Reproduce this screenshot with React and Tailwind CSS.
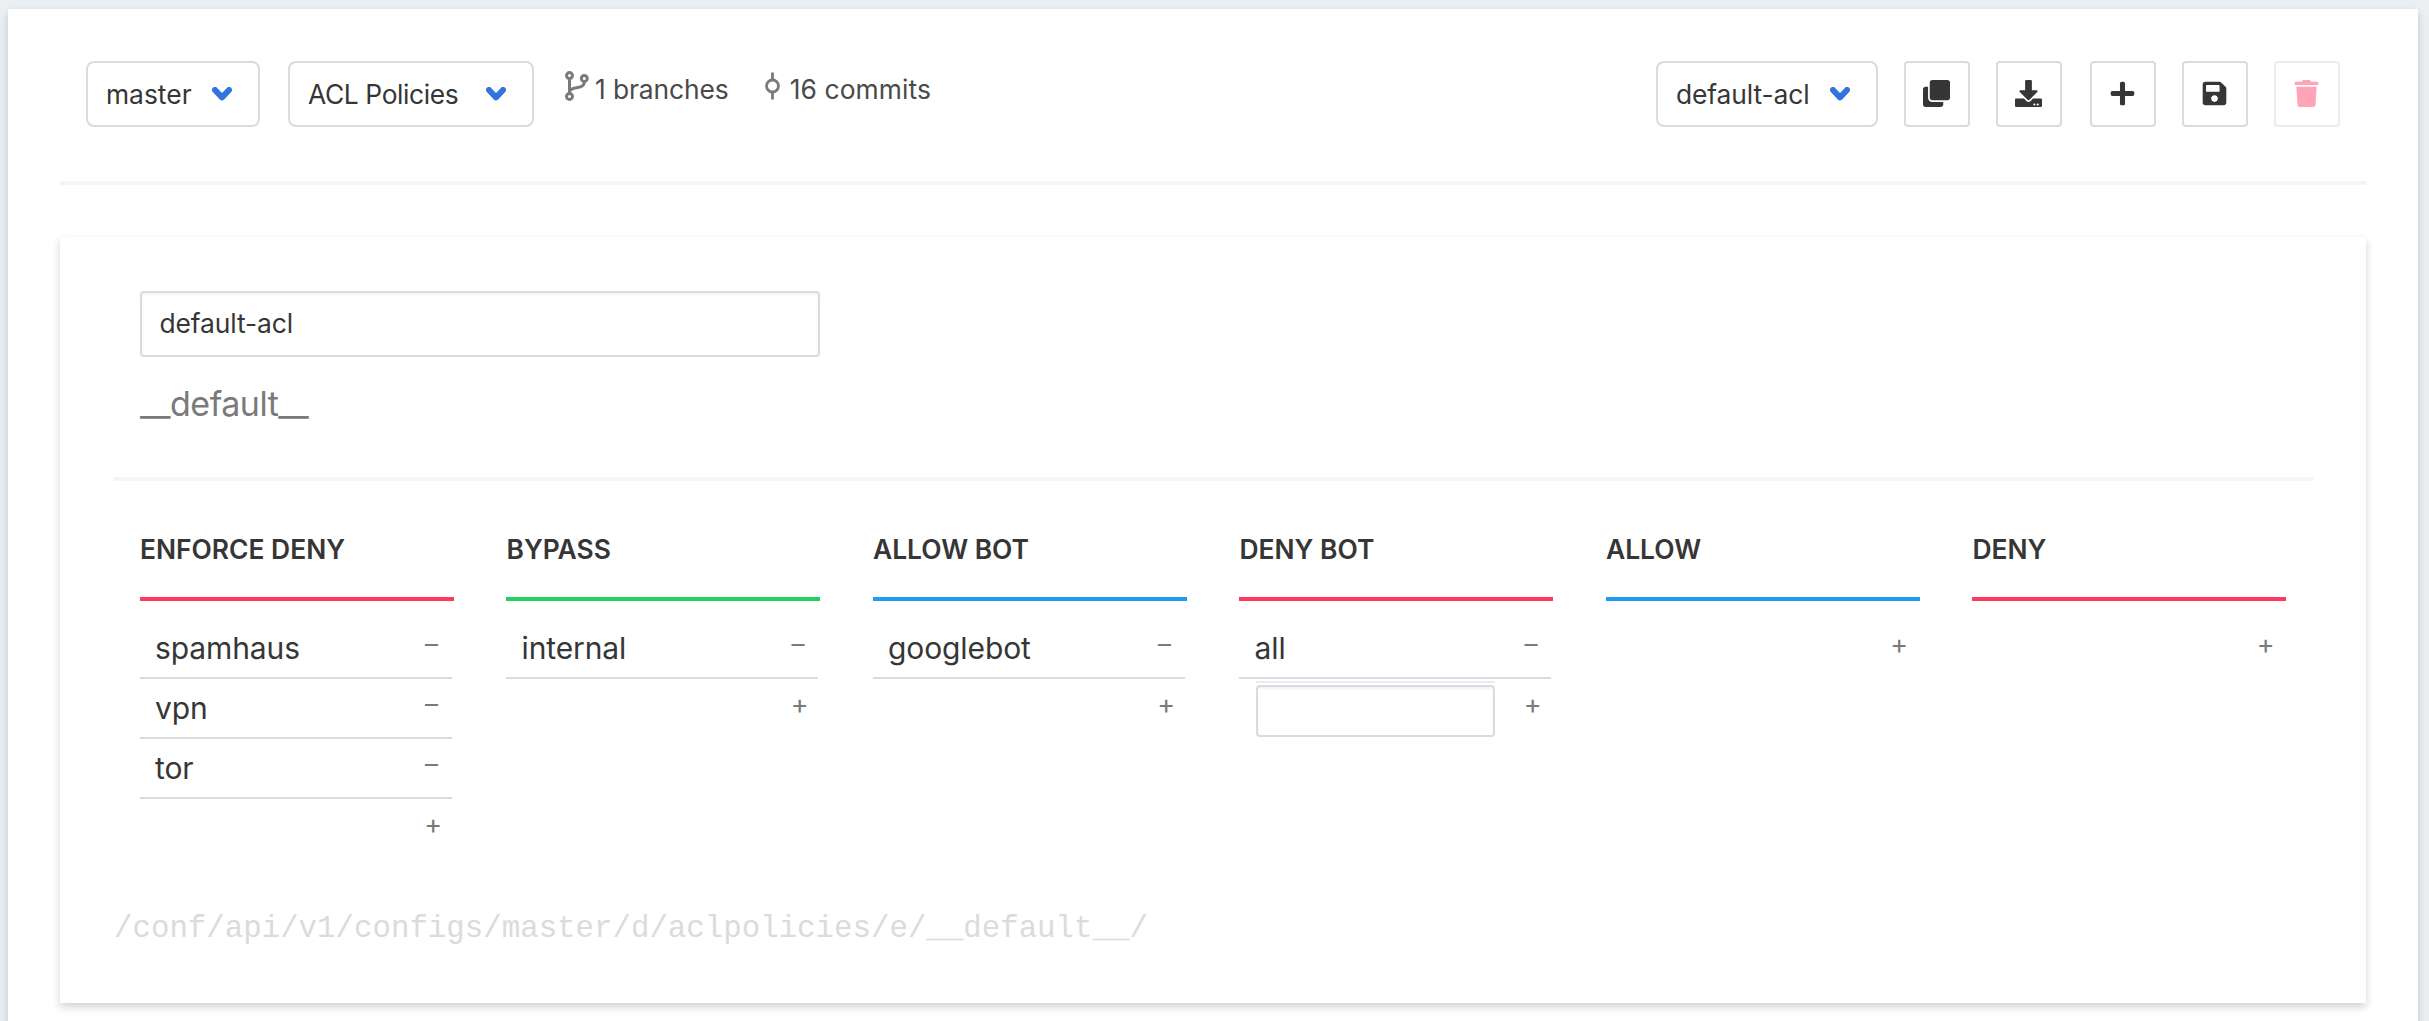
import { FaClone, FaDownload, FaPlus, FaSave, FaTrash } from "react-icons/fa";

const columns = [
  { title: "ENFORCE DENY", bar: "bg-[#ff3860]", items: ["spamhaus", "vpn", "tor"] },
  { title: "BYPASS", bar: "bg-[#23d160]", items: ["internal"] },
  { title: "ALLOW BOT", bar: "bg-[#209cee]", items: ["googlebot"] },
  { title: "DENY BOT", bar: "bg-[#ff3860]", items: ["all"], editing: true },
  { title: "ALLOW", bar: "bg-[#209cee]", items: [] },
  { title: "DENY", bar: "bg-[#ff3860]", items: [] },
];

function Chevron() {
  return (
    <svg width="20" height="14" viewBox="0 0 20 14" fill="none" className="shrink-0">
      <path d="M3 3L10 10.4L17 3" stroke="#3273dc" strokeWidth="6" strokeLinecap="round" strokeLinejoin="round" />
    </svg>
  );
}

function Select({ label, className }) {
  return (
    <button
      className={`flex h-[66px] items-center justify-between rounded-lg border-2 border-[#dbdbdb] bg-white pr-[26px] pb-px pl-[18px] text-[#363636] ${className}`}
    >
      <span className="whitespace-nowrap">{label}</span>
      <Chevron />
    </button>
  );
}

function IconButton({ icon: Icon, className = "text-[#363636]" }) {
  return (
    <button className={`flex size-[66px] items-center justify-center rounded border-2 border-[#dbdbdb] bg-white pr-px pb-px ${className}`}>
      <Icon size={27} />
    </button>
  );
}

function BranchIcon() {
  return (
    <svg width="24" height="30" viewBox="0 0 24 30" fill="none" stroke="#7a7a7a" strokeWidth="3">
      <circle cx="4.5" cy="4.6" r="3" />
      <circle cx="4.5" cy="25.4" r="3" />
      <circle cx="19.3" cy="7.4" r="3" />
      <path d="M4.5 7.6V22.4M19.3 10.4C19.3 19.5 6 14.5 4.8 20.5" />
    </svg>
  );
}

function CommitIcon() {
  return (
    <svg width="15" height="28" viewBox="0 0 15 28" fill="none" stroke="#7a7a7a" strokeWidth="2.8">
      <circle cx="7.5" cy="14" r="6" />
      <path d="M7.5 0.5V8M7.5 20V27.5" />
    </svg>
  );
}

function Column({ title, bar, items, editing }) {
  return (
    <div>
      <h2 className="mb-7 h-10 leading-10 font-semibold">{title}</h2>
      <div className={`mb-[18px] h-1 ${bar}`} />
      <div className="w-[312px] text-[30px] tracking-[-0.1px]">
        {items.map((item) => (
          <div key={item} className="flex h-[60px] items-center justify-between border-b-2 border-[#dbdbdb] pr-[14px] pb-px pl-[15px]">
            <span>{item}</span>
            <span className="pb-[7px] text-[26px] leading-none text-[#7a7a7a]">–</span>
          </div>
        ))}
        <div className="flex h-[60px] items-center pr-[10px] pl-[17px]">
          {editing && (
            <div className="mb-px h-[56px] w-[239px] border-t-2 border-[#e6ecf9] pt-0.5">
              <div className="h-[52px] rounded border-2 border-[#dbdbdb] shadow-[inset_0_2px_2px_rgba(10,10,10,0.05)]" />
            </div>
          )}
          <span className="ml-auto pb-2.5 text-[27px] leading-none text-[#7a7a7a]">+</span>
        </div>
      </div>
    </div>
  );
}

export default function App() {
  return (
    <div className="h-[1021px] overflow-hidden bg-[#ebeff2] pt-[9px] pr-[11px] pl-2 font-['Inter',sans-serif] text-[26.4px] leading-10 text-[#363636]">
      <div className="h-[1060px] bg-white px-[52px] pt-[52px] shadow-[0_4px_8px_rgba(10,10,10,0.18)]">
        <header className="flex items-start justify-between px-[26px]">
          <div className="flex">
            <Select label="master" className="w-[174px]" />
            <div className="ml-7">
              <Select label="ACL Policies" className="w-[246px] tracking-[-0.4px]" />
            </div>
            <div className="mt-2 ml-[31px] flex h-10 text-[#4a4a4a]">
              <span className="mt-[2px]"><BranchIcon /></span>
              <span className="ml-1.5 tracking-[-0.1px]">1 branches</span>
              <span className="mt-[3px] ml-[36px]"><CommitIcon /></span>
              <span className="ml-2.5 tracking-[0.1px]">16 commits</span>
            </div>
          </div>
          <div className="flex gap-[26px]">
            <Select label="default-acl" className="w-[222px] tracking-[-0.1px]" />
            <IconButton icon={FaClone} />
            <IconButton icon={FaDownload} />
            <div className="ml-0.5">
              <IconButton icon={FaPlus} />
            </div>
            <IconButton icon={FaSave} />
            <IconButton icon={FaTrash} className="text-[#ff4c70] opacity-50" />
          </div>
        </header>

        <div className="mt-[54px] h-1 bg-[#f5f5f5]" />

        <main className="mt-[52px] h-[766px] bg-white pt-[54px] pr-[52px] pl-[54px] shadow-[0_4px_8px_rgba(10,10,10,0.18)]">
          <div className="pl-[26px]">
            <div className="flex h-[66px] w-[680px] items-center rounded border-2 border-[#dbdbdb] pb-0.5 pl-[17.5px] tracking-[-0.1px] shadow-[inset_0_2px_2px_rgba(10,10,10,0.05)]">
              default-acl
            </div>
            <div className="mt-[25px] mb-[51px] h-11 text-[34px] leading-[44px] tracking-[-0.5px] text-[#7a7a7a]">__default__</div>
          </div>

          <div className="h-1 bg-[#f5f5f5]" />

          <div className="mt-12 grid w-[2172.4px] grid-cols-6 gap-x-[52.6px] pl-[26px]">
            {columns.map((column) => (
              <Column key={column.title} {...column} />
            ))}
          </div>

          <div className="mt-[50px] font-['Liberation_Mono',monospace] text-[30.77px] text-[#dbdbdb]">
            /conf/api/v1/configs/master/d/aclpolicies/e/__default__/
          </div>
        </main>
      </div>
    </div>
  );
}
